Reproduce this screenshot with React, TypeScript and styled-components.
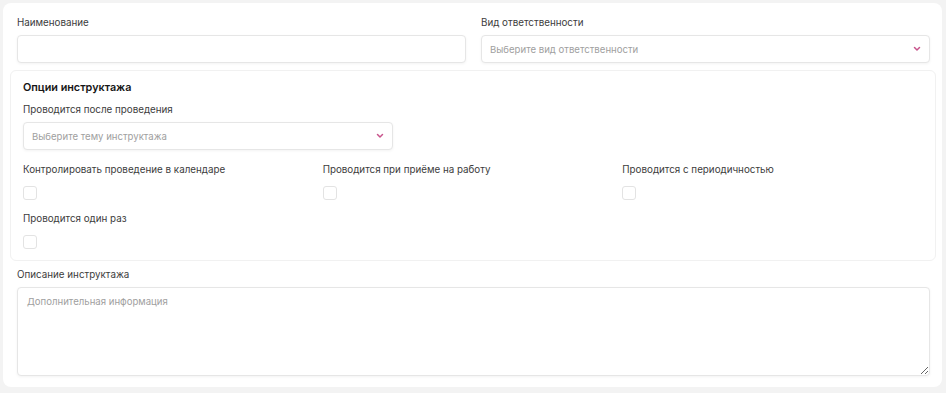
import React from "react";
import styled, { createGlobalStyle } from "styled-components";

const Global = createGlobalStyle`
  html, body { margin: 0; padding: 0; background: #f3f3f3; }
  body { font-family: Inter, "Noto Sans", sans-serif; }
  * { box-sizing: border-box; }
`;

const Page = styled.div`
  padding: 3px 4px 4px 3px;
`;

const Card = styled.div`
  background: #fff;
  border-radius: 8px;
  padding: 13px 12px 11px 14px;
  display: flex;
  flex-direction: column;
`;

const TopRow = styled.div`
  display: grid;
  grid-template-columns: 1fr 1fr;
  column-gap: 15px;
`;

const Field = styled.div<{ $gap?: number }>`
  display: flex;
  flex-direction: column;
  gap: ${(p) => (p.$gap ?? 5)}px;
`;

const Label = styled.label`
  font-size: 9.8px;
  line-height: 14px;
  color: #3c3c3c;
  white-space: nowrap;
`;

const Input = styled.input`
  height: 28px;
  border: 1px solid #e6e6e6;
  border-radius: 4px;
  box-shadow: 0 1px 3px rgba(0, 0, 0, 0.05);
  background: #fff;
  padding: 0 8px;
  font: inherit;
  font-size: 10px;
  outline: none;
`;

const SelectBox = styled.div<{ $width?: string }>`
  height: 28px;
  width: ${(p) => p.$width || "auto"};
  border: 1px solid #e6e6e6;
  border-radius: 4px;
  box-shadow: 0 1px 3px rgba(0, 0, 0, 0.05);
  background: #fff;
  padding: 0 8px 0 8px;
  display: flex;
  align-items: center;
  justify-content: space-between;
`;

const Placeholder = styled.span`
  font-size: 9.6px;
  color: #a0a0a0;
`;

const Section = styled.div`
  margin: 7px -6px 7px -7px;
  border: 1px solid #f1f1f1;
  border-radius: 6px;
  padding: 9px 13px 11px 12px;
  display: flex;
  flex-direction: column;
`;

const Title = styled.div`
  font-size: 10.8px;
  line-height: 16px;
  font-weight: 600;
  color: #161616;
  margin-bottom: 7px;
`;

const SectionField = styled(Field)`
  margin-bottom: 13px;
`;

const Checks = styled.div`
  display: grid;
  grid-template-columns: repeat(3, 1fr);
  row-gap: 12px;
`;

const CheckField = styled.div`
  display: flex;
  flex-direction: column;
  gap: 9px;
`;

const Box = styled.span`
  width: 14px;
  height: 14px;
  border: 1px solid #e3e3e3;
  border-radius: 3px;
  background: #fff;
`;

const TextArea = styled.textarea`
  height: 89px;
  border: 1px solid #e6e6e6;
  border-radius: 4px;
  box-shadow: 0 1px 3px rgba(0, 0, 0, 0.05);
  padding: 8px 9px;
  font: inherit;
  font-size: 9.6px;
  color: #333;
  resize: vertical;
  outline: none;
  &::placeholder { color: #a0a0a0; }
`;

const Chevron = () => (
  <svg width="8" height="6" viewBox="0 0 8 6" fill="none">
    <path d="M1.5 1.5 L4 4 L6.5 1.5" stroke="#c8548c" strokeWidth="1.5" strokeLinecap="round" strokeLinejoin="round" />
  </svg>
);

const checks = [
  "Контролировать проведение в календаре",
  "Проводится при приёме на работу",
  "Проводится с периодичностью",
  "Проводится один раз",
];

export default function App() {
  return (
    <>
      <Global />
      <Page>
        <Card>
          <TopRow>
            <Field>
              <Label>Наименование</Label>
              <Input />
            </Field>
            <Field>
              <Label>Вид ответственности</Label>
              <SelectBox>
                <Placeholder>Выберите вид ответственности</Placeholder>
                <Chevron />
              </SelectBox>
            </Field>
          </TopRow>
          <Section>
            <Title>Опции инструктажа</Title>
            <SectionField>
              <Label>Проводится после проведения</Label>
              <SelectBox $width="370px">
                <Placeholder>Выберите тему инструктажа</Placeholder>
                <Chevron />
              </SelectBox>
            </SectionField>
            <Checks>
              {checks.map((c) => (
                <CheckField key={c}>
                  <Label>{c}</Label>
                  <Box />
                </CheckField>
              ))}
            </Checks>
          </Section>
          <Field>
            <Label>Описание инструктажа</Label>
            <TextArea placeholder="Дополнительная информация" />
          </Field>
        </Card>
      </Page>
    </>
  );
}
